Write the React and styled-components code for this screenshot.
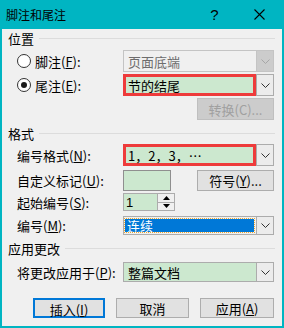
import React from 'react';
import styled, { createGlobalStyle, css } from 'styled-components';

const Global = createGlobalStyle`
    body {
        margin: 0;
        background: #f0f0f0;
        font-family: "Noto Sans CJK SC", "Liberation Sans", sans-serif;
        font-size: 13px;
        color: #000;
    }
`;

const teal = '#00b5c2';
const green = '#cce8cf';
const red = '#ee3b3b';

const Window = styled.div`
    width: 284px;
    height: 328px;
    box-sizing: border-box;
    border: 2px solid ${teal};
    border-top: 0;
    background: #f0f0f0;
    display: flex;
    flex-direction: column;
`;

const TitleBar = styled.div`
    height: 29px;
    background: ${teal};
    display: flex;
    align-items: center;
    padding-left: 4px;
    font-size: 12px;
`;

const TitleText = styled.div`
    flex: 1;
`;

const TitleBtn = styled.div`
    width: 45px;
    height: 29px;
    display: flex;
    align-items: center;
    justify-content: center;
    font-family: "Liberation Sans", sans-serif;
    font-size: 15px;
`;

const Body = styled.div`
    padding: 0 8px 0 6px;
    display: flex;
    flex-direction: column;
`;

const Section = styled.div`
    height: 18px;
    margin-top: ${p => p.$top || 0}px;
    display: flex;
    align-items: center;
    gap: 5px;
`;

const Rule = styled.div`
    flex: 1;
    height: 1px;
    background: #dcdcdc;
    margin-right: -1px;
`;

const Row = styled.div`
    height: ${p => p.$h}px;
    margin-top: ${p => p.$top}px;
    padding-left: 9px;
    display: flex;
    align-items: center;
`;

const Label = styled.div`
    width: 106px;
    display: flex;
    align-items: center;
    white-space: nowrap;
`;

const Radio = styled.span`
    width: 12px;
    height: 12px;
    border: 1px solid #333;
    border-radius: 50%;
    background: #fff;
    margin-right: 4px;
    display: flex;
    align-items: center;
    justify-content: center;
    &::after {
        content: '';
        width: 6px;
        height: 6px;
        border-radius: 50%;
        background: ${p => (p.$on ? '#1a1a1a' : 'transparent')};
    }
`;

const Key = styled.span`
    text-decoration: underline;
`;

const Combo = styled.div`
    width: 151px;
    height: 100%;
    box-sizing: border-box;
    border: 1px solid ${p => (p.$off ? '#c4c4c4' : '#acacac')};
    display: flex;
`;

const Field = styled.div`
    flex: 1;
    display: flex;
    align-items: center;
    padding-left: 4px;
    background: ${p => (p.$off ? '#f0f0f0' : green)};
    color: ${p => (p.$off ? '#6d6d6d' : '#000')};
    ${p => p.$marked && css`
        margin: -1px 0 -1px -1px;
        border: 3px solid ${red};
        padding-left: 2px;
    `}
`;

const Drop = styled.div`
    width: 16px;
    border-left: 1px solid ${p => (p.$off ? '#c4c4c4' : '#acacac')};
    background: ${p => (p.$off ? '#cccccc' : '#ececec')};
    display: flex;
    align-items: center;
    justify-content: center;
`;

const Selected = styled.div`
    flex: 1;
    margin: 2px 2px 2px 1px;
    padding-left: 2px;
    background: #0078d7;
    color: #fff;
    outline: 1px dotted #f0a830;
    display: flex;
    align-items: center;
`;

const Button = styled.button`
    width: ${p => p.$w || 73}px;
    height: ${p => p.$h || 22}px;
    box-sizing: border-box;
    margin: 0 0 0 ${p => (p.$push ? 'auto' : '0')};
    padding: 0;
    font-family: inherit;
    font-size: 13px;
    border: 1px solid #adadad;
    background: #e1e1e1;
    color: #000;
    ${p => p.$primary && css`
        border: 2px solid #0078d7;
    `}
    ${p => p.disabled && css`
        border-color: #bfbfbf;
        background: #cccccc;
        color: #a0a0a0;
    `}
`;

const Swatch = styled.div`
    width: 48px;
    height: 100%;
    box-sizing: border-box;
    border: 1px solid #8f8f8f;
    background: ${green};
`;

const Spin = styled.div`
    width: 52px;
    height: 100%;
    box-sizing: border-box;
    border: 1px solid #acacac;
    display: flex;
`;

const SpinField = styled.div`
    flex: 1;
    background: ${green};
    display: flex;
    align-items: center;
    padding-left: 2px;
    font-family: "Liberation Sans", sans-serif;
`;

const SpinBtns = styled.div`
    width: 16px;
    border-left: 1px solid #acacac;
    background: #f0f0f0;
    display: flex;
    flex-direction: column;
`;

const SpinHalf = styled.div`
    flex: 1;
    display: flex;
    align-items: center;
    justify-content: center;
    & + & {
        border-top: 1px solid #acacac;
    }
`;

const Footer = styled.div`
    margin-top: 16px;
    height: 20px;
    display: flex;
    justify-content: flex-end;
    gap: 11px;
`;

const Chevron = ({ off }) => (
    <svg width="9" height="5" viewBox="0 0 9 5">
        <polyline points="0.5,0.5 4.5,4.5 8.5,0.5" fill="none" stroke={off ? '#a6a6a6' : '#333'} strokeWidth="1" />
    </svg>
);

const Tri = ({ up }) => (
    <svg width="7" height="4" viewBox="0 0 7 4">
        <polygon points={up ? '0,4 7,4 3.5,0' : '0,0 7,0 3.5,4'} fill="#000" />
    </svg>
);

const App = () => (
    <>
        <Global />
        <Window>
            <TitleBar>
                <TitleText>脚注和尾注</TitleText>
                <TitleBtn>?</TitleBtn>
                <TitleBtn>
                    <svg width="11" height="11" viewBox="0 0 11 11">
                        <path d="M0.5 0.5 L10.5 10.5 M10.5 0.5 L0.5 10.5" stroke="#000" strokeWidth="1.1" />
                    </svg>
                </TitleBtn>
            </TitleBar>
            <Body>
                <Section>位置<Rule /></Section>
                <Row $h={22} $top={3}>
                    <Label><Radio />脚注(<Key>F</Key>):</Label>
                    <Combo $off>
                        <Field $off>页面底端</Field>
                        <Drop $off><Chevron off /></Drop>
                    </Combo>
                </Row>
                <Row $h={22} $top={2}>
                    <Label><Radio $on />尾注(<Key>E</Key>):</Label>
                    <Combo>
                        <Field $marked>节的结尾</Field>
                        <Drop><Chevron /></Drop>
                    </Combo>
                </Row>
                <Row $h={22} $top={2}>
                    <Button $w={77} $push disabled>转换(C)...</Button>
                </Row>
                <Section $top={4}>格式<Rule /></Section>
                <Row $h={22} $top={2}>
                    <Label>编号格式(<Key>N</Key>):</Label>
                    <Combo>
                        <Field $marked>1，2，3，…</Field>
                        <Drop><Chevron /></Drop>
                    </Combo>
                </Row>
                <Row $h={21} $top={4}>
                    <Label>自定义标记(<Key>U</Key>):</Label>
                    <Swatch />
                    <Button $w={77} $h={21} $push>符号(<Key>Y</Key>)...</Button>
                </Row>
                <Row $h={18} $top={2}>
                    <Label>起始编号(<Key>S</Key>):</Label>
                    <Spin>
                        <SpinField>1</SpinField>
                        <SpinBtns>
                            <SpinHalf><Tri up /></SpinHalf>
                            <SpinHalf><Tri /></SpinHalf>
                        </SpinBtns>
                    </Spin>
                </Row>
                <Row $h={19} $top={5}>
                    <Label>编号(<Key>M</Key>):</Label>
                    <Combo>
                        <Selected>连续</Selected>
                        <Drop><Chevron /></Drop>
                    </Combo>
                </Row>
                <Section $top={4}>应用更改<Rule /></Section>
                <Row $h={20} $top={5}>
                    <Label>将更改应用于(<Key>P</Key>):</Label>
                    <Combo>
                        <Field>整篇文档</Field>
                        <Drop><Chevron /></Drop>
                    </Combo>
                </Row>
                <Footer>
                    <Button $h={20} $w={72} $primary>插入(<Key>I</Key>)</Button>
                    <Button $h={20}>取消</Button>
                    <Button $h={20} $w={74}>应用(<Key>A</Key>)</Button>
                </Footer>
            </Body>
        </Window>
    </>
);

export default App;
